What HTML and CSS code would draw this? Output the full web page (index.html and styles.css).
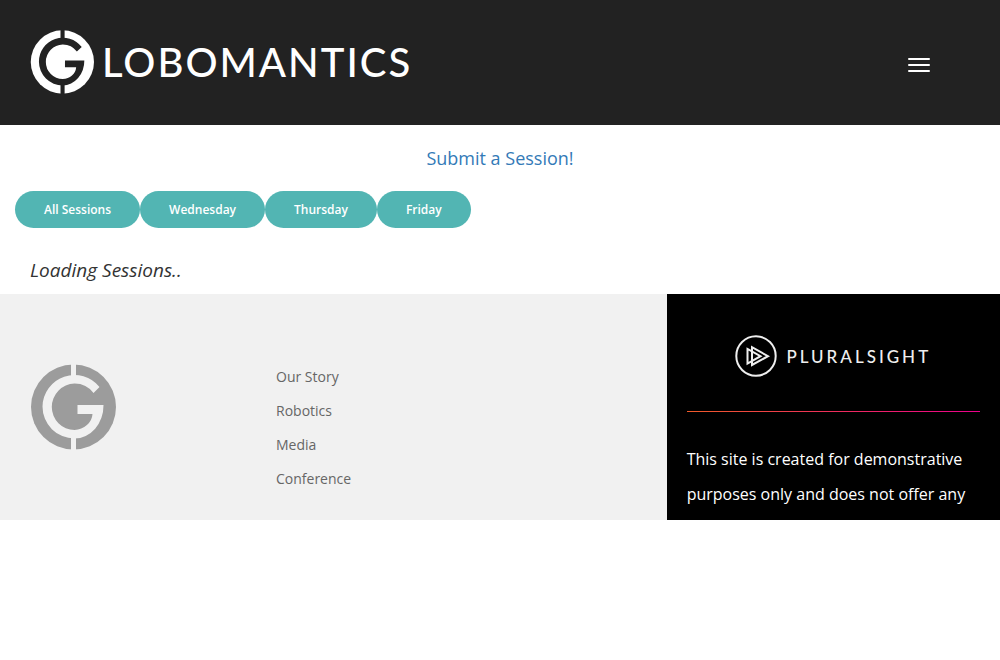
FILE: index.html
```html
<!DOCTYPE html>
<html lang="en">
<head>
<meta charset="utf-8">
<meta name="viewport" content="width=device-width, initial-scale=1">
<title>Globomantics</title>
<link rel="stylesheet" href="styles.css">
</head>
<body>
<header class="header">
  <a class="brand" href="#">
    <svg class="brand-mark" viewBox="0 0 86 86" aria-hidden="true">
      <circle class="mark-disc" cx="43.500" cy="43" r="42.500"/>
      <path class="mark-cut" d="M41 0h5.500v12h-5.500zM41 73h5.500v13h-5.500z"/>
      <path class="mark-cut" d="M69.500 23A32 32 0 0 0 12 42.500A32 32 0 0 0 44 74.500A29 33 0 0 0 73 41H47V50H62A19 17 0 0 1 44 66A23 23 0 0 1 21.300 43A23.500 23.500 0 0 1 44 19.500A23.500 23.500 0 0 1 63 29Z"/>
    </svg>
    <span class="brand-name">LOBOMANTICS</span>
  </a>
  <button class="menu-button" type="button" aria-label="Open menu">
    <span class="menu-bar"></span><span class="menu-bar"></span><span class="menu-bar"></span>
  </button>
</header>
<main>
  <p class="submit"><a class="submit-link" href="#">Submit a Session!</a></p>
  <div class="filters">
    <button class="filter" type="button">All Sessions</button>
    <button class="filter" type="button">Wednesday</button>
    <button class="filter" type="button">Thursday</button>
    <button class="filter" type="button">Friday</button>
  </div>
  <p class="loading">Loading Sessions..</p>
</main>
<footer class="footer">
  <div class="footer-main">
    <svg class="footer-mark" viewBox="0 0 86 86" aria-hidden="true">
      <circle class="mark-disc" cx="43.500" cy="43" r="42.500"/>
      <path class="mark-cut" d="M41 0h5v12h-5zM41 73h5v13h-5z"/>
      <path class="mark-cut" d="M69.500 23A32 32 0 0 0 12.500 42.500A32 32 0 0 0 44.500 74.500A29 33 0 0 0 73.500 41H47.500V50H62.500A19 17 0 0 1 44.500 66A23 23 0 0 1 21.800 43A23.500 23.500 0 0 1 44.500 19.500A23.500 23.500 0 0 1 63.500 29Z"/>
    </svg>
    <nav class="footer-nav">
      <a class="footer-link" href="#">Our Story</a>
      <a class="footer-link" href="#">Robotics</a>
      <a class="footer-link" href="#">Media</a>
      <a class="footer-link" href="#">Conference</a>
    </nav>
  </div>
  <aside class="notice">
    <div class="sponsor">
      <svg class="sponsor-mark" viewBox="0 0 42 42" aria-hidden="true">
        <circle cx="21" cy="21" r="19.700"/>
        <path d="M12.500 14V28.500L25.500 21.200ZM17 12.200V30L33 21.200Z"/>
      </svg>
      <span class="sponsor-name">PLURALSIGHT</span>
    </div>
    <hr class="rule">
    <p class="notice-text">This site is created for demonstrative purposes only and does not offer any</p>
  </aside>
</footer>
</body>
</html>
```

FILE: styles.css
```css
* { box-sizing: border-box; }
body {
  margin: 0;
  background: #fff;
  color: #222;
  font-family: "Open Sans", sans-serif;
}
p { margin: 0; }
a { text-decoration: none; }
.header {
  --mark: #fff;
  --cut: #222;
  display: flex;
  align-items: center;
  justify-content: space-between;
  padding: 30px 60px 31px 30px;
  background: #222;
}
.brand {
  display: flex;
  align-items: center;
  gap: 8px;
  color: #fff;
}
.brand-mark { width: 64px; height: 64px; }
.mark-disc { fill: var(--mark); }
.mark-cut { fill: var(--cut); }
.brand-name {
  font-family: Lato, sans-serif;
  font-size: 40px;
  font-weight: 500;
  line-height: 64px;
  letter-spacing: 2px;
}
.menu-button {
  display: flex;
  flex-direction: column;
  gap: 4px;
  padding: 12px 10px 6px;
  border: 0;
  background: none;
}
.menu-bar {
  width: 22px;
  height: 2px;
  border-radius: 1px;
  background: #fff;
}
.submit {
  padding-top: 20px;
  text-align: center;
  font-size: 18px;
  line-height: 26px;
}
.submit-link { color: #337ab7; }
.filters {
  display: flex;
  flex-wrap: wrap;
  padding: 20px 15px 0;
}
.filter {
  padding: 10px 29px;
  border: 0;
  border-radius: 19px;
  background: #52b5b3;
  color: #fff;
  font: 600 12px/17px "Open Sans", sans-serif;
}
.loading {
  padding: 30px 30px 11px;
  color: #333;
  font-size: 19px;
  font-style: italic;
  line-height: 25px;
}
.footer {
  display: grid;
  grid-template-columns: 2fr 1fr;
}
.footer-main {
  --mark: #9c9c9c;
  --cut: #f1f1f1;
  display: grid;
  grid-template-columns: 246px 1fr;
  align-items: start;
  padding: 66px 30px 24px;
  background: #f1f1f1;
}
.footer-mark { width: 86px; height: 86px; margin-top: 4px; }
.footer-nav {
  display: flex;
  flex-direction: column;
  align-items: flex-start;
}
.footer-link {
  color: #666;
  font-size: 14px;
  line-height: 34px;
}
.notice {
  padding: 41px 20px 8px;
  background: #000;
  color: #fff;
}
.sponsor {
  display: flex;
  align-items: center;
  justify-content: center;
  gap: 9px;
}
.sponsor-mark {
  width: 42px;
  height: 42px;
  fill: none;
  stroke: #eee;
  stroke-width: 2;
}
.sponsor-name {
  color: #eee;
  font-family: Lato, sans-serif;
  font-size: 17px;
  font-weight: 500;
  letter-spacing: 3px;
}
.rule {
  height: 1px;
  margin: 34px 0 30px;
  border: 0;
  background: linear-gradient(90deg, #f15b2a, #ec008c);
}
.notice-text {
  font-size: 16px;
  line-height: 35px;
}
```
